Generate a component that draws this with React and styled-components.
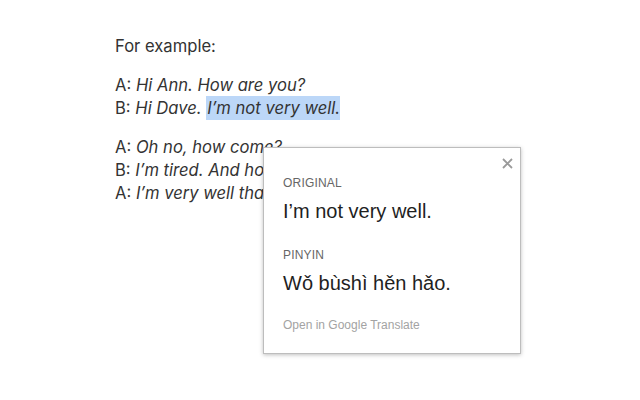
import React from 'react'
import styled, { createGlobalStyle } from 'styled-components'

const Global = createGlobalStyle`
  html, body {
    margin: 0;
    padding: 0;
    background: #fff;
  }
  body {
    width: 640px;
    height: 400px;
    overflow: hidden;
  }
`

const Page = styled.div`
  position: relative;
  width: 640px;
  height: 400px;
  padding: 35px 0 0 115px;
  box-sizing: border-box;
  font-family: "Inter", "Open Sans", sans-serif;
  font-size: 16.6px;
  color: #333;
`

const Para = styled.p`
  margin: 0 0 16px;
  line-height: 23px;
`

const Line = styled.span`
  display: block;
`

const Speech = styled.em`
  font-style: italic;
`

const Mark = styled.span`
  background: #bcd7f8;
  padding: 2px 0 2px 1px;
`

const Popup = styled.div`
  position: absolute;
  left: 263px;
  top: 147px;
  width: 258px;
  height: 207px;
  box-sizing: border-box;
  padding: 28px 19px 0;
  background: #fff;
  border: 1px solid #bdbdbd;
  box-shadow: 0 1px 4px rgba(0, 0, 0, 0.25);
  font-family: "Liberation Sans", Arial, sans-serif;
  color: #222;
`

const Close = styled.button`
  position: absolute;
  top: 7px;
  right: 5px;
  border: 0;
  background: none;
  padding: 0;
  width: 16px;
  height: 16px;
  display: flex;
  align-items: center;
  justify-content: center;
  cursor: pointer;
`

const Label = styled.div`
  font-size: 12px;
  color: #666;
  line-height: 14px;
  letter-spacing: 0.2px;
`

const Value = styled.div`
  font-size: 20px;
  line-height: 22px;
  margin: 10px 0 ${p => p.$after}px;
  color: #1f1f1f;
`

const Link = styled.a`
  display: block;
  font-size: 12px;
  color: #a3a3a3;
  text-decoration: none;
  line-height: 14px;
`

export default function App() {
  return (
    <>
      <Global />
      <Page>
        <Para>For example:</Para>
        <Para>
          <Line>A: <Speech>Hi Ann. How are you?</Speech></Line>
          <Line>B: <Speech>Hi Dave. <Mark>I’m not very well.</Mark></Speech></Line>
        </Para>
        <Para>
          <Line>A: <Speech>Oh no, how come?</Speech></Line>
          <Line>B: <Speech>I’m tired. And how about you?</Speech></Line>
          <Line>A: <Speech>I’m very well thanks.</Speech></Line>
        </Para>
        <Popup>
          <Close aria-label="Close">
            <svg width="11" height="11" viewBox="0 0 11 11">
              <path d="M1 1L10 10M10 1L1 10" stroke="#9a9a9a" strokeWidth="1.8" />
            </svg>
          </Close>
          <Label>ORIGINAL</Label>
          <Value $after={26}>I’m not very well.</Value>
          <Label>PINYIN</Label>
          <Value $after={24}>Wǒ bùshì hěn hǎo.</Value>
          <Link href="#">Open in Google Translate</Link>
        </Popup>
      </Page>
    </>
  )
}
